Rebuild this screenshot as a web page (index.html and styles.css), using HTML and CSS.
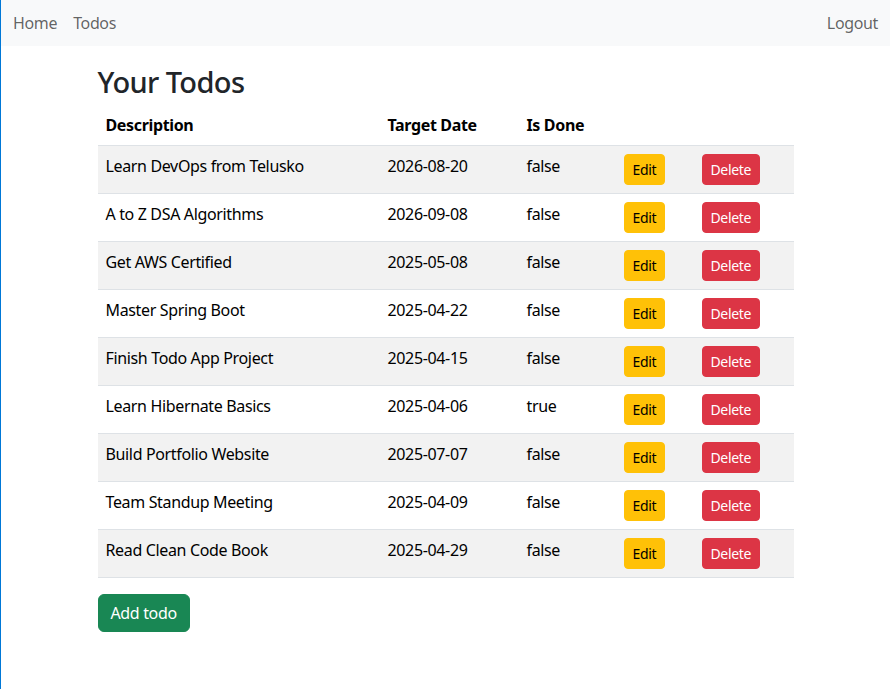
FILE: index.html
```html
<!DOCTYPE html>
<html lang="en">
<head>
<meta charset="utf-8">
<title>Todos</title>
<link rel="stylesheet" href="styles.css">
</head>
<body>
<nav class="navbar">
  <div class="nav-left">
    <a class="nav-link" href="#">Home</a>
    <a class="nav-link" href="#">Todos</a>
  </div>
  <a class="nav-link" href="#">Logout</a>
</nav>
<main class="container">
  <h1 class="title">Your Todos</h1>
  <table class="table">
    <colgroup>
      <col class="c1"><col class="c2"><col class="c3"><col class="c4"><col class="c5">
    </colgroup>
    <thead>
      <tr><th>Description</th><th>Target Date</th><th>Is Done</th><th></th><th></th></tr>
    </thead>
    <tbody>
      <tr><td>Learn DevOps from Telusko</td><td>2026-08-20</td><td>false</td><td><a class="btn btn-warning" href="#">Edit</a></td><td><a class="btn btn-danger" href="#">Delete</a></td></tr>
      <tr><td>A to Z DSA Algorithms</td><td>2026-09-08</td><td>false</td><td><a class="btn btn-warning" href="#">Edit</a></td><td><a class="btn btn-danger" href="#">Delete</a></td></tr>
      <tr><td>Get AWS Certified</td><td>2025-05-08</td><td>false</td><td><a class="btn btn-warning" href="#">Edit</a></td><td><a class="btn btn-danger" href="#">Delete</a></td></tr>
      <tr><td>Master Spring Boot</td><td>2025-04-22</td><td>false</td><td><a class="btn btn-warning" href="#">Edit</a></td><td><a class="btn btn-danger" href="#">Delete</a></td></tr>
      <tr><td>Finish Todo App Project</td><td>2025-04-15</td><td>false</td><td><a class="btn btn-warning" href="#">Edit</a></td><td><a class="btn btn-danger" href="#">Delete</a></td></tr>
      <tr><td>Learn Hibernate Basics</td><td>2025-04-06</td><td>true</td><td><a class="btn btn-warning" href="#">Edit</a></td><td><a class="btn btn-danger" href="#">Delete</a></td></tr>
      <tr><td>Build Portfolio Website</td><td>2025-07-07</td><td>false</td><td><a class="btn btn-warning" href="#">Edit</a></td><td><a class="btn btn-danger" href="#">Delete</a></td></tr>
      <tr><td>Team Standup Meeting</td><td>2025-04-09</td><td>false</td><td><a class="btn btn-warning" href="#">Edit</a></td><td><a class="btn btn-danger" href="#">Delete</a></td></tr>
      <tr><td>Read Clean Code Book</td><td>2025-04-29</td><td>false</td><td><a class="btn btn-warning" href="#">Edit</a></td><td><a class="btn btn-danger" href="#">Delete</a></td></tr>
    </tbody>
  </table>
  <a class="btn btn-success btn-lg" href="#">Add todo</a>
</main>
</body>
</html>
```

FILE: styles.css
```css
* { box-sizing: border-box; }
html { height: 100%; }
body {
  margin: 0;
  min-height: 100%;
  border-left: 1px solid #0078d7;
  font-family: "Noto Sans", "Open Sans", sans-serif;
  font-size: 16px;
  line-height: 1.5;
  letter-spacing: -0.35px;
  color: #212529;
  background: #fff;
}
.navbar {
  display: flex;
  justify-content: space-between;
  align-items: center;
  height: 46px;
  padding: 0 4px;
  background: #f8f9fa;
}
.nav-left { display: flex; }
.nav-link {
  display: block;
  padding: 8px 8px;
  color: rgba(0, 0, 0, 0.62);
  text-decoration: none;
}
.container {
  width: 720px;
  margin: 0 auto;
  padding: 16px 12px 0;
}
.title {
  margin: 3px 0 5px;
  font-size: 29px;
  font-weight: 500;
  line-height: 1.2;
  letter-spacing: -0.6px;
}
.table {
  width: 100%;
  border-collapse: collapse;
  margin-bottom: 16px;
  color: #000;
}
.c1 { width: 282px; }
.c2 { width: 139px; }
.c3 { width: 97px; }
.c4 { width: 78px; }
.c5 { width: 100px; }
.table th, .table td {
  padding: 8px;
  text-align: left;
  vertical-align: top;
  border-bottom: 1px solid #dee2e6;
}
.table th { font-weight: 700; }
.table tbody tr:nth-child(odd) td { background: #f2f2f2; }
.btn {
  display: inline-block;
  padding: 4px 8px;
  font-size: 14px;
  line-height: 1.5;
  border: 1px solid transparent;
  border-radius: 4px;
  text-decoration: none;
}
.btn-warning { background: #ffc107; border-color: #ffc107; color: #000; }
.btn-danger { background: #dc3545; border-color: #dc3545; color: #fff; }
.btn-success { background: #198754; border-color: #198754; color: #fff; }
.btn-lg { padding: 6px 12px; font-size: 16px; border-radius: 6px; }
```
